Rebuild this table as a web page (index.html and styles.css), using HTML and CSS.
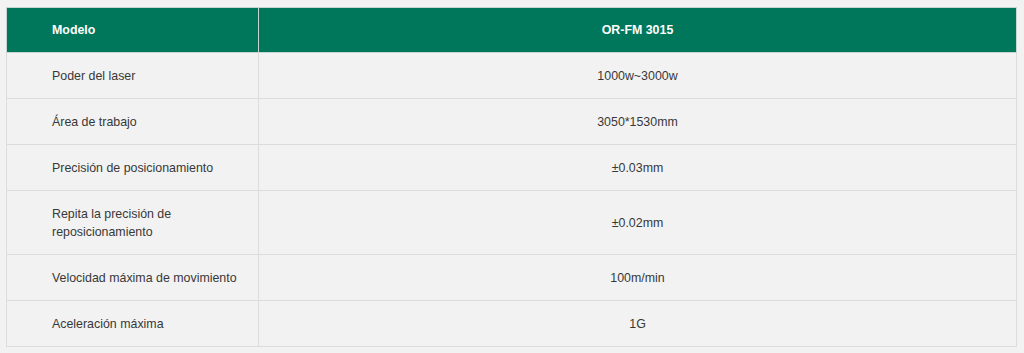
FILE: index.html
```html
<!DOCTYPE html>
<html lang="es">
<head>
<meta charset="utf-8">
<link rel="stylesheet" href="styles.css">
</head>
<body>
<table class="spec">
  <thead>
    <tr><th class="label">Modelo</th><th class="value">OR-FM 3015</th></tr>
  </thead>
  <tbody>
    <tr><td class="label">Poder del laser</td><td class="value">1000w~3000w</td></tr>
    <tr><td class="label">Área de trabajo</td><td class="value">3050*1530mm</td></tr>
    <tr><td class="label">Precisión de posicionamiento</td><td class="value">±0.03mm</td></tr>
    <tr><td class="label">Repita la precisión de<br>reposicionamiento</td><td class="value">±0.02mm</td></tr>
    <tr><td class="label">Velocidad máxima de movimiento</td><td class="value">100m/min</td></tr>
    <tr><td class="label">Aceleración máxima</td><td class="value">1G</td></tr>
  </tbody>
</table>
</body>
</html>
```

FILE: styles.css
```css
html, body {
  margin: 0;
  background: #f2f2f2;
}
body {
  padding: 7px 8px 0 6px;
  font-family: "Liberation Sans", Arial, sans-serif;
  font-size: 12.4px;
  color: #383838;
}
.spec {
  width: 1011px;
  border-collapse: collapse;
  table-layout: fixed;
  background: #f2f2f2;
}
.spec th, .spec td {
  border: 1px solid #dcdcdc;
  padding: 13.5px 10px 13.5px 45px;
  line-height: 18px;
  text-align: left;
  vertical-align: middle;
}
.spec .label {
  width: 252px;
  box-sizing: border-box;
}
.spec .value {
  text-align: center;
  padding-left: 10px;
}
.spec thead th {
  background: #00765b;
  color: #fff;
  font-weight: bold;
  border-color: #c8d6d1;
  padding-top: 13px;
  padding-bottom: 13px;
}
```
